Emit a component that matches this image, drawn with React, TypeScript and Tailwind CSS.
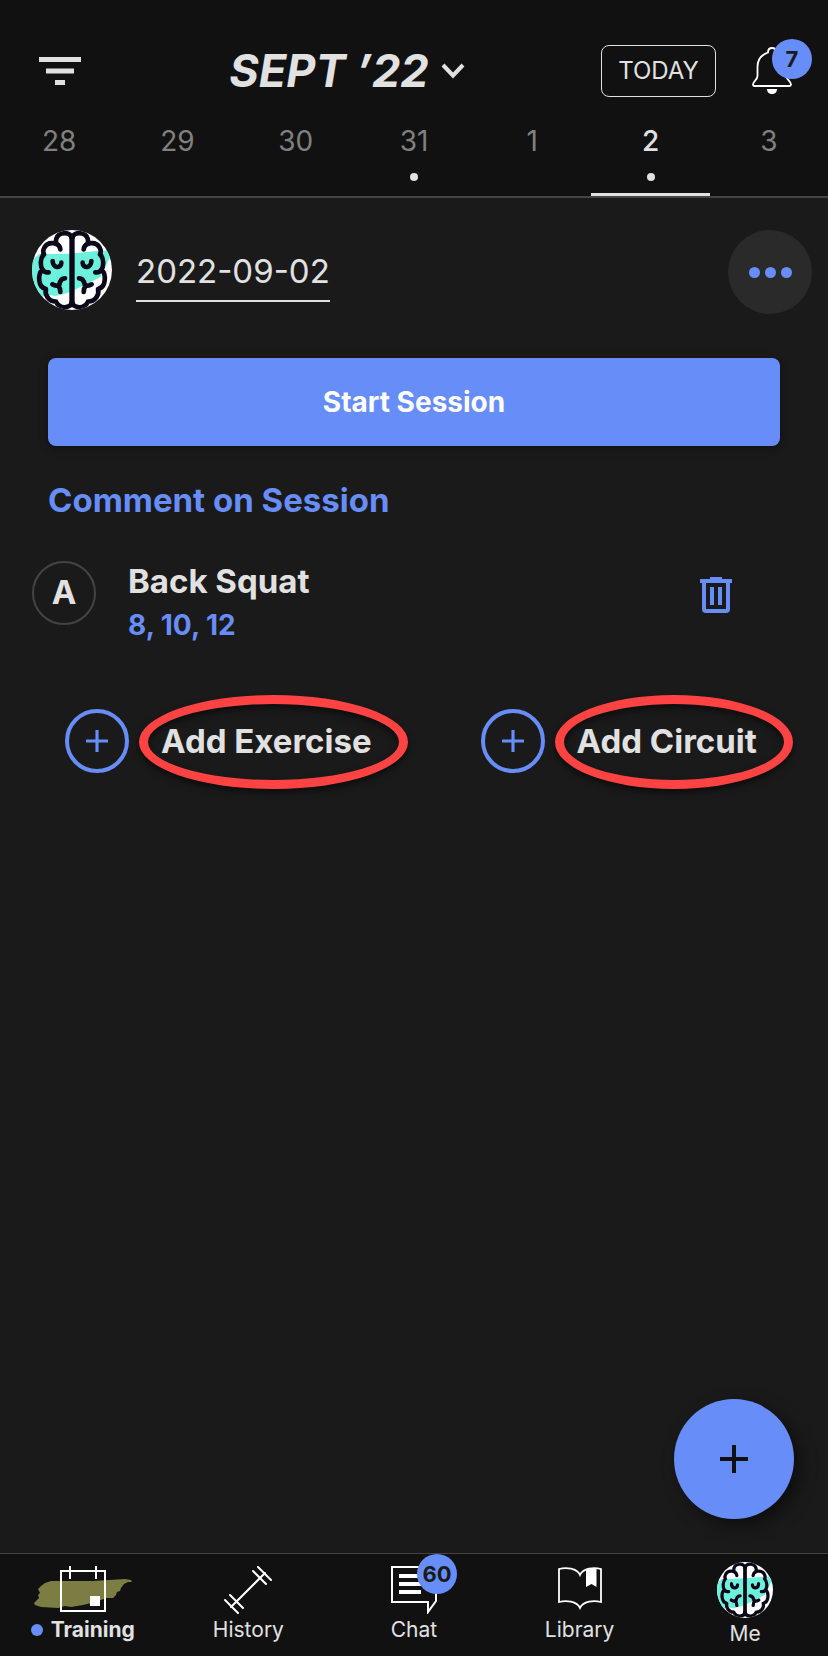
import type { ReactNode } from "react";

type Day = {
  label: string;
  hasSession?: boolean;
  isActive?: boolean;
};

const days: Day[] = [
  { label: "28" },
  { label: "29" },
  { label: "30" },
  { label: "31", hasSession: true },
  { label: "1" },
  { label: "2", hasSession: true, isActive: true },
  { label: "3" },
];

// One half of the brain, the other half is mirrored
const BrainHalf = () => (
  <>
    <path d="M216 84C210 64 176 64 169 86C167 92 167 96 169 101" />
    <path d="M181 118C178 96 144 92 133 113C129 120 129 127 132 133C120 143 120 170 128 179C132 186 139 188 146 187" />
    <path d="M127 180C113 192 113 232 138 237C133 254 146 275 168 275C178 298 212 296 216 276" />
    <path d="M158 153C158 176 184 176 184 158" />
    <path d="M157 223C165 228 174 228 178 224C180 212 186 205 195 205" />
    <path d="M174 226C179 232 181 238 181 246" />
  </>
);

const BrainAvatar = ({ className }: { className: string }) => (
  <svg
    viewBox="96 60 240 240"
    className={`rounded-full bg-white ${className}`}
    aria-hidden="true"
  >
    <path
      d="M96 158L102 146L116 133L200 131L240 128L290 123L322 122L334 136L326 150L316 170L306 186L302 200L280 212L240 232L205 248L168 258L140 254L120 262L96 230Z"
      fill="#6cf2dc"
    />
    <g fill="none" stroke="#0b0718" strokeWidth="14" strokeLinecap="round" strokeLinejoin="round">
      <BrainHalf />
      <g transform="matrix(-1 0 0 1 432 0)">
        <BrainHalf />
      </g>
      <path d="M216 80V284" strokeWidth="16" />
    </g>
  </svg>
);

const BellIcon = () => (
  <svg viewBox="0 0 40 48" className="h-12 w-10" fill="none" aria-hidden="true">
    <path
      d="M16 5.5C16 2.8 17.5 1 20 1S24 2.8 24 5.5C31 8 34.500 13 34.500 20V29C34.500 33 39 34 39 37.500C39 38.600 38.500 39 37.500 39H2.500C1.500 39 1 38.600 1 37.500C1 34 5.500 33 5.500 29V20C5.500 13 9 8 16 5.500Z"
      stroke="white"
      strokeWidth="1.8"
    />
    <path d="M15 42H25C25 45 23 47 20 47S15 45 15 42Z" fill="white" />
  </svg>
);

const TrashIcon = () => (
  <svg viewBox="0 0 32 36" className="h-9 w-8" fill="none" aria-hidden="true">
    <path d="M0 2H10V0H22V2H32V6H0Z" fill="#678df8" />
    <path d="M4 5V32Q4 34 6 34H26Q28 34 28 32V5" stroke="#678df8" strokeWidth="4" />
    <path d="M12 10V28M20 10V28" stroke="#678df8" strokeWidth="4" />
  </svg>
);

const TrainingIcon = () => (
  <svg viewBox="0 0 100 48" className="mt-1 h-12 w-[100px]" fill="none" aria-hidden="true">
    <path
      d="M1 37L4 34L6 32L5 29L7 27L5 23L8 20L12 17L18 15L60 15L76 14L92 13L98 14L99 16L95 16L91 18L88 22L87 25L84 26L83 29L80 32L73 32L63 36L50 39L38 41L32 40L25 42L8 41L2 39Z"
      fill="#7b7d42"
    />
    <path d="M28 5H72V45H28Z" stroke="white" strokeWidth="2" />
    <path d="M37 0V13M63 0V13" stroke="white" strokeWidth="2" />
    <path d="M57 30H67V40H57Z" fill="white" />
  </svg>
);

const HistoryIcon = () => (
  <svg viewBox="0 0 48 48" className="mt-1 size-12" fill="none" aria-hidden="true">
    <g stroke="white" strokeWidth="2" strokeLinecap="round">
      <path d="M7 41L41 7" />
      <path d="M34 1L47 14M29 5L42 18M1 34L14 47M6 29L19 42" />
    </g>
  </svg>
);

const ChatIcon = () => (
  <svg viewBox="0 0 46 48" className="mt-1 h-12 w-[46px]" fill="none" aria-hidden="true">
    <path d="M1 1H45V35L37 46V36H1Z" stroke="white" strokeWidth="2" />
    <path d="M8 10H38M8 18H38M8 26H30" stroke="white" strokeWidth="4" />
  </svg>
);

const LibraryIcon = () => (
  <svg viewBox="0 0 44 48" className="mt-1 h-12 w-11" fill="none" aria-hidden="true">
    <path
      d="M1 3C8 1 19 2 22 9C25 2 36 1 43 3V36C36 34 25 35 22 42C19 35 8 34 1 36Z"
      stroke="white"
      strokeWidth="1.8"
    />
    <path d="M28 3H38.500V21L33.500 18L28 21Z" fill="white" />
  </svg>
);

const PlusIcon = ({ className, strokeWidth }: { className: string; strokeWidth: number }) => (
  <svg viewBox="0 0 28 28" className={className} aria-hidden="true">
    <path d="M14 0V28M0 14H28" stroke="currentColor" strokeWidth={strokeWidth} />
  </svg>
);

const Badge = ({ children }: { children: ReactNode }) => (
  <span className="absolute -top-2 -right-5 flex size-10 items-center justify-center rounded-full bg-[#678df8] text-[22px] font-bold text-[#1a1a1a]">
    {children}
  </span>
);

// Hand drawn ring around the highlighted label
const Ring = () => (
  <span className="pointer-events-none absolute -top-[22px] -right-9 -bottom-6 -left-[22px] rounded-[50%] border-9 border-[#ff4343] shadow-[0_4px_6px_rgba(0,0,0,0.5),inset_0_4px_6px_rgba(0,0,0,0.5)]" />
);

const AddButton = ({ label }: { label: string }) => (
  <button type="button" className="flex items-center gap-8 text-[33px] font-bold">
    <span className="flex size-16 items-center justify-center rounded-full border-4 border-[#678df8] text-[#678df8]">
      <PlusIcon className="size-[22px]" strokeWidth={4} />
    </span>
    <span className="relative leading-[48px] whitespace-nowrap">
      {label}
      <Ring />
    </span>
  </button>
);

type NavItemProps = {
  label: string;
  icon: ReactNode;
  badge?: string;
  isActive?: boolean;
};

const NavItem = ({ label, icon, badge, isActive }: NavItemProps) => (
  <a href="#" className="flex flex-col items-center pt-2">
    <span className="relative">
      {icon}
      {badge && <Badge>{badge}</Badge>}
    </span>
    <span
      className={`flex items-center gap-2 text-[21px] leading-8 ${isActive ? "font-bold" : ""}`}
    >
      {isActive && <span className="size-3 rounded-full bg-[#678df8]" />}
      {label}
    </span>
  </a>
);

const App = () => {
  return (
    <div className="flex min-h-screen flex-col bg-[#1a1a1a] font-['Inter',sans-serif] text-[#e1e1e1]">
      {/* Header */}
      <header className="border-b-2 border-[#444] bg-[#111]">
        <div className="flex items-center pt-10 pr-9 pl-[39px]">
          <button type="button" aria-label="Filter">
            <svg viewBox="0 0 42 28" className="h-7 w-[42px]" aria-hidden="true">
              <path d="M0 2.500H42M7 14H35M16 25.500H26" stroke="#e1e1e1" strokeWidth="5" />
            </svg>
          </button>
          <button type="button" className="flex flex-1 items-center justify-center gap-3 pl-3">
            <h1 className="text-[45px] leading-[62px] font-bold italic">SEPT ’22</h1>
            <svg viewBox="0 0 24 16" className="h-4 w-6" fill="none" aria-hidden="true">
              <path d="M2 2L12 12.500L22 2" stroke="#e1e1e1" strokeWidth="4" />
            </svg>
          </button>
          <button
            type="button"
            className="h-[52px] w-[115px] rounded-lg border border-[#e1e1e1] text-2xl"
          >
            TODAY
          </button>
          <button type="button" aria-label="Notifications" className="relative ml-9">
            <BellIcon />
            <Badge>7</Badge>
          </button>
        </div>
        <div className="grid grid-cols-7">
          {days.map((day) => (
            <button
              key={day.label}
              type="button"
              className={`flex h-[94px] flex-col items-center border-b-3 pt-[19px] text-[28px] leading-10 ${
                day.isActive
                  ? "border-[#e1e1e1] font-medium"
                  : "border-transparent text-[#808080]"
              }`}
            >
              {day.label}
              {day.hasSession && <span className="mt-3 size-2 rounded-full bg-[#e1e1e1]" />}
            </button>
          ))}
        </div>
      </header>

      <main className="relative flex-1">
        {/* Session date */}
        <div className="flex items-start pt-8 pr-4 pl-8">
          <BrainAvatar className="size-20" />
          <input
            type="text"
            aria-label="Session date"
            defaultValue="2022-09-02"
            className="mt-4 ml-6 h-14 w-[194px] border-b-2 border-[#e1e1e1] bg-transparent pb-1 text-[33px] outline-none"
          />
          <button
            type="button"
            aria-label="More options"
            className="ml-auto flex size-[84px] items-center justify-center gap-[5px] rounded-full bg-[#2a2a2a]"
          >
            <span className="size-[11px] rounded-full bg-[#678df8]" />
            <span className="size-[11px] rounded-full bg-[#678df8]" />
            <span className="size-[11px] rounded-full bg-[#678df8]" />
          </button>
        </div>

        <div className="px-12 pt-11">
          <button
            type="button"
            className="h-[88px] w-full rounded-lg bg-[#678df8] text-[28px] font-bold text-white shadow-[0_2px_8px_rgba(0,0,0,0.4)]"
          >
            Start Session
          </button>
          <button
            type="button"
            className="mt-[30px] block text-[33px] leading-12 font-bold text-[#678df8]"
          >
            Comment on Session
          </button>
        </div>

        {/* Exercise */}
        <div className="flex items-start pt-[37px] pr-24 pl-8">
          <span className="flex size-16 items-center justify-center rounded-full border-2 border-[#444] text-[33px] font-bold">
            A
          </span>
          <div className="ml-8 font-bold">
            <h2 className="text-[33px] leading-10">Back Squat</h2>
            <p className="mt-1 text-[28px] leading-10 text-[#678df8]">8, 10, 12</p>
          </div>
          <button type="button" aria-label="Delete Back Squat" className="mt-4 ml-auto">
            <TrashIcon />
          </button>
        </div>

        <div className="grid grid-cols-2 pt-16 pl-[65px]">
          <AddButton label="Add Exercise" />
          <div className="pl-[34px]">
            <AddButton label="Add Circuit" />
          </div>
        </div>

        <button
          type="button"
          aria-label="Add"
          className="absolute right-[34px] bottom-[34px] flex size-[120px] items-center justify-center rounded-full bg-[#678df8] text-[#111] shadow-[6px_6px_16px_rgba(0,0,0,0.5)]"
        >
          <PlusIcon className="size-7" strokeWidth={4} />
        </button>
      </main>

      {/* Bottom navigation */}
      <nav className="grid h-[103px] grid-cols-5 border-t border-[#444] bg-[#111]">
        <NavItem label="Training" icon={<TrainingIcon />} isActive />
        <NavItem label="History" icon={<HistoryIcon />} />
        <NavItem label="Chat" icon={<ChatIcon />} badge="60" />
        <NavItem label="Library" icon={<LibraryIcon />} />
        <NavItem label="Me" icon={<BrainAvatar className="size-14" />} />
      </nav>
    </div>
  );
};

export default App;
